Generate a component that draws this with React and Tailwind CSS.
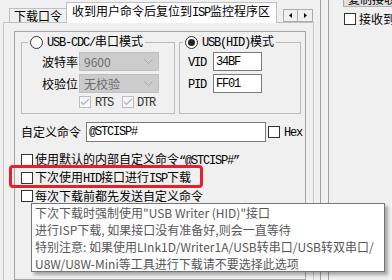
const M = ({ children }) => (
  <span className="font-['Liberation_Mono',monospace] tracking-[-1.2px]">{children}</span>
)

function Check({ checked, disabled, className = '' }) {
  return (
    <span
      className={`flex h-[12px] w-[12px] shrink-0 items-center justify-center border ${
        disabled ? 'border-[#bcbcbc] bg-[#f7f7f7]' : 'border-[#333333] bg-white'
      } ${className}`}
    >
      {checked && (
        <svg width="10" height="8" viewBox="0 0 10 8">
          <path d="M1 4 L3.5 6.5 L9 1" fill="none" stroke={disabled ? '#b5b5b5' : '#333'} strokeWidth="1.2" />
        </svg>
      )}
    </span>
  )
}

function Radio({ checked }) {
  return (
    <span className="flex h-[13px] w-[13px] shrink-0 items-center justify-center rounded-full border border-[#333333] bg-white">
      {checked && <span className="h-[7px] w-[7px] rounded-full bg-[#222222]" />}
    </span>
  )
}

function Combo({ value }) {
  return (
    <div className="ml-[1px] flex h-[19px] w-[80px] items-center justify-between border border-[#bfbfbf] bg-[#cccccc] pl-[4px] pr-[5px] text-[#6d6d6d]">
      <span className="leading-[17px]">{value}</span>
      <svg width="9" height="5" viewBox="0 0 9 5">
        <path d="M0.5 0.5 L4.5 4.5 L8.5 0.5" fill="none" stroke="#a8a8a8" />
      </svg>
    </div>
  )
}

function Edit({ value, className = '' }) {
  return (
    <div className={`flex h-[19px] items-center border border-[#7a7a7a] bg-white pl-[2px] ${className}`}>
      <M>{value}</M>
    </div>
  )
}

export default function App() {
  return (
    <div className="relative flex h-[280px] w-[392px] overflow-hidden bg-[#f0f0f0] font-['Noto_Sans_CJK_SC',sans-serif] text-[12px] leading-[14px] text-black">
      {/* tab control */}
      <div className="flex w-[314px] shrink-0 flex-col">
        <div className="ml-[3px] flex h-[23px] items-end border-b border-[#c0c0c0] pl-[6px] pr-[1px]">
          <div className="flex h-[14px] w-[57px] items-center justify-center border-l border-t border-[#c0c0c0]">
            下载口令
          </div>
          <div className="relative mb-[-1px] h-[21px] w-[211px] border-x border-t border-[#c0c0c0] bg-white pl-[5px] pt-[1px] whitespace-nowrap">
            收到用户命令后复位到<M>ISP</M>监控程序区
          </div>
          <div className="flex-1" />
          <div className="flex h-[13px]">
            <div className="flex w-[15px] items-center justify-center border border-[#adadad] bg-[#f0f0f0]">
              <svg width="3" height="5" viewBox="0 0 3 5">
                <path d="M3 0 L0 2.5 L3 5 Z" fill="#000" />
              </svg>
            </div>
            <div className="flex w-[15px] items-center justify-center border border-l-0 border-[#adadad] bg-[#f0f0f0]">
              <svg width="3" height="5" viewBox="0 0 3 5">
                <path d="M0 0 L3 2.5 L0 5 Z" fill="#000" />
              </svg>
            </div>
          </div>
        </div>

        <div className="ml-[3px] flex flex-1 flex-col border-x border-[#c8c8c8] pl-[10px] pr-[7px] pt-[8px]">
          <div className="flex flex-1 flex-col border border-[#a6a6a6] pt-[3px]">
            <div className="flex gap-[4px] pl-[6px] pr-[4px]">
              <fieldset className="w-[154px] border border-[#bcbcbc]">
                <legend className="ml-[6px] flex h-[14px] items-center gap-[4px] px-[2px]">
                  <Radio />
                  <span className="whitespace-nowrap">
                    <M>USB-CDC/</M>串口模式
                  </span>
                </legend>
                <div className="mt-[3px] flex flex-col gap-[3px] pl-[20px]">
                  <div className="flex h-[19px] items-center">
                    <span className="w-[36px]">波特率</span>
                    <Combo value="9600" />
                  </div>
                  <div className="flex h-[19px] items-center">
                    <span className="w-[36px]">校验位</span>
                    <Combo value="无校验" />
                  </div>
                </div>
                <div className="mb-[5px] mt-[3px] flex h-[12px] items-center pl-[57px]">
                  <Check checked disabled />
                  <span className="ml-[4px] text-[#333333]">
                    <M>RTS</M>
                  </span>
                  <Check checked disabled className="ml-[9px]" />
                  <span className="ml-[3px] text-[#333333]">
                    <M>DTR</M>
                  </span>
                </div>
              </fieldset>

              <fieldset className="w-[122px] border border-[#bcbcbc]">
                <legend className="ml-[3px] flex h-[14px] items-center gap-[4px] px-[2px]">
                  <Radio checked />
                  <span className="whitespace-nowrap">
                    <M>USB(HID)</M>模式
                  </span>
                </legend>
                <div className="mt-[3px] flex flex-col gap-[3px] pl-[8px]">
                  <div className="flex h-[19px] items-center">
                    <span className="w-[25px]">
                      <M>VID</M>
                    </span>
                    <Edit value="34BF" className="w-[49px]" />
                  </div>
                  <div className="flex h-[19px] items-center">
                    <span className="w-[25px]">
                      <M>PID</M>
                    </span>
                    <Edit value="FF01" className="w-[49px]" />
                  </div>
                </div>
              </fieldset>
            </div>

            <div className="mt-[8px] flex h-[20px] items-center pl-[6px]">
              <span className="w-[60px]">自定义命令</span>
              <Edit value="@STCISP#" className="ml-[5px] h-[20px] w-[180px]" />
              <Check className="ml-[2px]" />
              <span className="ml-[4px]">
                <M>Hex</M>
              </span>
            </div>

            <div className="mt-[9px] flex flex-col pl-[6px]">
              <div className="flex h-[18px] items-center whitespace-nowrap">
                <Check />
                <span className="ml-[2px]">
                  使用默认的内部自定义命令<M>“@STCISP#”</M>
                </span>
              </div>
              <div className="flex h-[18px] items-center whitespace-nowrap">
                <Check />
                <span className="ml-[2px]">
                  下次使用<M>HID</M>接口进行<M>ISP</M>下载
                </span>
              </div>
              <div className="flex h-[18px] items-center whitespace-nowrap">
                <Check />
                <span className="ml-[2px]">每次下载前都先发送自定义命令</span>
              </div>
            </div>
          </div>
        </div>
      </div>

      {/* splitter */}
      <div className="w-[6px] shrink-0" />
      <div className="w-[8px] shrink-0 border-l border-[#a0a0a0]" />

      {/* right panel */}
      <div className="flex flex-1 flex-col border-l border-[#a0a0a0] pl-[14px]">
        <div className="mt-[-9px] flex h-[16px] items-center whitespace-nowrap border border-[#adadad] bg-[#e1e1e1] pl-[4px]">
          复制接收数据
        </div>
        <div className="ml-[1px] mt-[6px] flex h-[12px] items-center whitespace-nowrap">
          <Check />
          <span className="ml-[3px]">接收到数据</span>
        </div>
      </div>

      {/* highlight */}
      <div className="absolute left-[9px] top-[165px] h-[23px] w-[194px] rounded-[4px] border-[3px] border-[#e8202a]" />

      {/* tooltip */}
      <div className="absolute left-[31px] top-[203px] h-[69px] w-[354px] border border-[#767676] bg-white pl-[3px] text-[#575757] shadow-[3px_3px_3px_rgba(0,0,0,0.3)]">
        <div className="whitespace-nowrap leading-[17px]">下次下载时强制使用"USB Writer (HID)"接口</div>
        <div className="whitespace-nowrap leading-[17px]">进行ISP下载, 如果接口没有准备好,则会一直等待</div>
        <div className="whitespace-nowrap leading-[17px]">特别注意: 如果使用LInk1D/Writer1A/USB转串口/USB转双串口/</div>
        <div className="whitespace-nowrap leading-[17px]">U8W/U8W-Mini等工具进行下载请不要选择此选项</div>
      </div>
    </div>
  )
}
